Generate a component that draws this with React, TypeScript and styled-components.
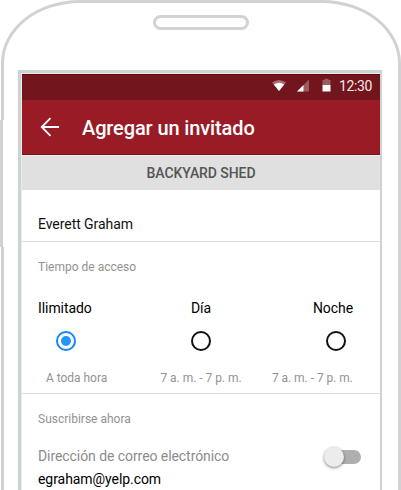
import React from "react";
import styled, { createGlobalStyle } from "styled-components";

const GlobalStyle = createGlobalStyle`
  * { box-sizing: border-box; }
  body { margin: 0; background: #fff; overflow: hidden; font-family: Roboto, "Noto Sans", sans-serif; }
`;

const Stage = styled.div`
  position: relative;
  width: 401px;
  height: 490px;
  overflow: hidden;
  padding-left: 1px;
`;

const Phone = styled.div`
  width: 400px;
  height: 490px;
  border: 3px solid #d0d2d3;
  border-bottom: 0;
  border-radius: 79px 79px 0 0 / 63px 63px 0 0;
  display: flex;
  flex-direction: column;
`;

const SideKey = styled.div<{ $side: "left" | "right"; $top: number; $height: number }>`
  position: absolute;
  ${(p) => p.$side}: 0;
  top: ${(p) => p.$top}px;
  height: ${(p) => p.$height}px;
  width: 4px;
  background: #fff;
  border-${(p) => p.$side}: 3px solid #d0d2d3;
`;

const Speaker = styled.div`
  width: 96px;
  height: 15px;
  margin: 12px 0 0 148.5px;
  border: 3px solid #d0d2d3;
  border-radius: 7.5px;
`;

const Screen = styled.main`
  margin: 40px 0 0 14px;
  width: 364px;
  flex: 1;
  border: 3px solid #cdd2d3;
  border-right-width: 2px;
  border-bottom: 0;
  padding: 1px 0 0 1px;
  background: #fff;
  box-shadow: inset 1px 1px 0 #e4f0f0;
  overflow: hidden;
`;

const StatusBar = styled.div`
  height: 26px;
  background: #72151c;
  border-top: 1px solid #650409;
  display: flex;
  align-items: center;
  padding: 0 0 4px 250px;
  color: #f5e9e9;
  font-size: 14px;
  svg { display: block; flex: none; }
`;

const Clock = styled.span`
  margin-left: 3px;
  line-height: 20px;
  letter-spacing: -0.4px;
`;

const AppBar = styled.header`
  height: 55px;
  background: #981b26;
  border-bottom: 1px solid #850c14;
  display: flex;
  align-items: center;
  padding-left: 18px;
  color: #fff;
`;

const Title = styled.h1`
  margin: 2px 0 0 22px;
  font-size: 20px;
  font-weight: 500;
  line-height: 24px;
  letter-spacing: -0.12px;
`;

const LockName = styled.div`
  height: 35px;
  border-top: 1px solid #edf3f3;
  background: #e0e0e0;
  color: #555;
  font-size: 14px;
  font-weight: 500;
  line-height: 34px;
  letter-spacing: -0.08px;
  text-align: center;
`;

const Section = styled.section<{ $height: number; $last?: boolean }>`
  height: ${(p) => p.$height}px;
  border-bottom: ${(p) => (p.$last ? "0" : "1px solid #dfdfdf")};
  padding: 0 16px;
`;

const GuestName = styled.div`
  padding-top: 26px;
  font-size: 14px;
  line-height: 16px;
  letter-spacing: -0.06px;
  color: #111;
`;

const Caption = styled.div`
  padding-top: 18px;
  font-size: 12px;
  line-height: 14px;
  color: #929292;
`;

const Options = styled.div`
  display: grid;
  grid-template-columns: 104px 118px 93px;
  padding-top: 26px;
`;

const Option = styled.label<{ $align: string }>`
  display: flex;
  flex-direction: column;
  align-items: ${(p) => p.$align};
`;

const OptionName = styled.span`
  font-size: 14px;
  line-height: 16px;
  letter-spacing: -0.08px;
  color: #000;
`;

const Radio = styled.span<{ $on?: boolean; $left: number; $right: number }>`
  width: 20px;
  height: 20px;
  margin: 15px ${(p) => p.$right}px 0 ${(p) => p.$left}px;
  border: 2px solid ${(p) => (p.$on ? "#1686f5" : "#111")};
  border-radius: 50%;
  display: grid;
  place-items: center;
  &::after {
    content: "";
    width: 10px;
    height: 10px;
    border-radius: 50%;
    background: ${(p) => (p.$on ? "#2196f3" : "transparent")};
  }
`;

const Hours = styled.span<{ $indent?: number }>`
  margin: 20px 0 0 ${(p) => p.$indent ?? 0}px;
  font-size: 12px;
  line-height: 14px;
  letter-spacing: -0.03px;
  color: #929292;
  white-space: nowrap;
`;

const Subscribe = styled.div`
  display: flex;
  justify-content: space-between;
  padding-top: 20px;
`;

const FieldName = styled.div`
  font-size: 14px;
  line-height: 20px;
  letter-spacing: -0.07px;
  color: #8c8c8c;
`;

const Email = styled.div`
  margin-top: 4px;
  font-size: 14px;
  line-height: 18px;
  letter-spacing: -0.06px;
  color: #000;
`;

const Track = styled.div`
  width: 36px;
  height: 14px;
  margin: 4px 3px 0 0;
  border-radius: 7px;
  background: #afafaf;
  display: flex;
  align-items: center;
`;

const Thumb = styled.div`
  width: 20px;
  height: 20px;
  margin-left: -1px;
  flex: none;
  border-radius: 50%;
  background: #ececec;
  box-shadow: 0 1px 3px rgba(0, 0, 0, 0.5);
`;

export default function App() {
  return (
    <>
      <GlobalStyle />
      <Stage>
        <Phone>
          <Speaker />
          <Screen>
            <StatusBar>
              <svg width="64" height="16" viewBox="0 0 64 16">
                <path d="M0 4.5Q7 -0.5 14 4.5L7 13Z" fill="#a66b70" />
                <path d="M1.8 6.5Q7 3 12.2 6.5L7 13Z" fill="#fff" />
                <path d="M25 13.5L37 1.5V13.5Z" fill="#985c61" />
                <path d="M25 13.5L31.5 7V13.5Z" fill="#fff" />
                <path d="M50.5 2H52.5V.8H56.5V2H58.5V7H50.5Z" fill="#985c61" />
                <path d="M50.5 7H58.5V13.5H50.5Z" fill="#fff" />
              </svg>
              <Clock>12:30</Clock>
            </StatusBar>
            <AppBar>
              <svg width="20" height="20" viewBox="0 0 20 20" fill="none" stroke="#fff" strokeWidth="1.8">
                <path d="M19 10H2M10.5 1.2L1.7 10L10.5 18.8" />
              </svg>
              <Title>Agregar un invitado</Title>
            </AppBar>
            <LockName>BACKYARD SHED</LockName>
            <Section $height={52}>
              <GuestName>Everett Graham</GuestName>
            </Section>
            <Section $height={152}>
              <Caption>Tiempo de acceso</Caption>
              <Options>
                <Option $align="flex-start">
                  <OptionName>Ilimitado</OptionName>
                  <Radio $on $left={18} $right={0} />
                  <Hours $indent={8}>A toda hora</Hours>
                </Option>
                <Option $align="center">
                  <OptionName>Día</OptionName>
                  <Radio $left={0} $right={0} />
                  <Hours>7 a. m. - 7 p. m.</Hours>
                </Option>
                <Option $align="flex-end">
                  <OptionName>Noche</OptionName>
                  <Radio $left={0} $right={7} />
                  <Hours>7 a. m. - 7 p. m.</Hours>
                </Option>
              </Options>
            </Section>
            <Section $height={100} $last>
              <Caption>Suscribirse ahora</Caption>
              <Subscribe>
                <div>
                  <FieldName>Dirección de correo electrónico</FieldName>
                  <Email>egraham@yelp.com</Email>
                </div>
                <Track>
                  <Thumb />
                </Track>
              </Subscribe>
            </Section>
          </Screen>
        </Phone>
        <SideKey $side="left" $top={120} $height={127} />
        <SideKey $side="right" $top={178} $height={64} />
      </Stage>
    </>
  );
}
